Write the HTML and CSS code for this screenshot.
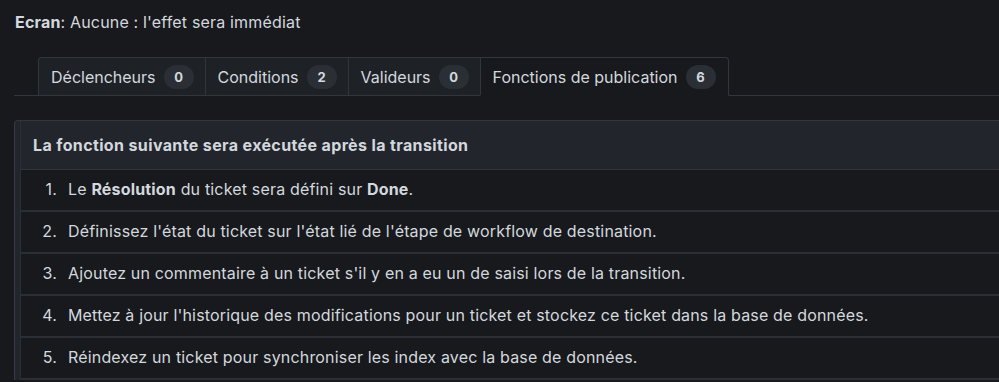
FILE: index.html
```html
<!DOCTYPE html>
<html lang="fr">
  <head>
    <meta charset="UTF-8" />
    <title>Transition</title>
    <link rel="stylesheet" href="styles.css">
  </head>
  <body>
    <p class="screen"><strong>Ecran</strong>: Aucune : l'effet sera immédiat</p>

    <div class="tabs">
      <div class="tab">Déclencheurs <span class="counter">0</span></div>
      <div class="tab">Conditions <span class="counter">2</span></div>
      <div class="tab">Valideurs <span class="counter">0</span></div>
      <div class="tab active">Fonctions de publication <span class="counter">6</span></div>
    </div>

    <div class="panel">
      <div class="panel-inner">
        <div class="panel-header">La fonction suivante sera exécutée après la transition</div>
        <ol class="steps">
          <li>Le <strong>Résolution</strong> du ticket sera défini sur <strong>Done</strong>.</li>
          <li>Définissez l'état du ticket sur l'état lié de l'étape de workflow de destination.</li>
          <li>Ajoutez un commentaire à un ticket s'il y en a eu un de saisi lors de la transition.</li>
          <li>Mettez à jour l'historique des modifications pour un ticket et stockez ce ticket dans la base de données.</li>
          <li>Réindexez un ticket pour synchroniser les index avec la base de données.</li>
        </ol>
      </div>
    </div>
  </body>
</html>
```

FILE: styles.css
```css
* {
  box-sizing: border-box;
}

body {
  background-color: #17191c;
  color: #d3d8de;
  margin: 0;
  padding: 10px 0 0 14px;
  overflow: hidden;
  font-family: Inter, 'Noto Sans', sans-serif;
  font-size: 16px;
  line-height: 24px;
  letter-spacing: 0.17px;
}

strong {
  font-weight: 700;
}

.screen {
  margin: 0 0 23px 1px;
}

.tabs {
  display: flex;
  padding-left: 24px;
  border-bottom: 1px solid #30363d;
  letter-spacing: 0;
}

.tab {
  display: flex;
  align-items: center;
  gap: 8px;
  height: 38px;
  padding: 0 11px 0 12px;
  margin-bottom: -1px;
  margin-right: -1px;
  background-color: #1e2227;
  border: 1px solid #30363d;
  border-bottom: 0;
}

.tab:first-child {
  border-top-left-radius: 4px;
}

.tab.active {
  background-color: #17191c;
  border-bottom: 1px solid #17191c;
  border-top-right-radius: 4px;
  height: 39px;
  padding-right: 12px;
}

.counter {
  display: inline-block;
  min-width: 30px;
  padding: 0 9px;
  line-height: 24px;
  border-radius: 12px;
  background-color: #2a2f36;
  font-size: 13px;
  font-weight: 700;
  text-align: center;
}

.panel {
  margin-top: 24px;
  border-left: 1px solid #353b42;
  border-top: 1px solid #30363d;
  border-top-left-radius: 4px;
  padding-left: 5px;
  background-color: #22262c;
}

.panel-inner {
  background-color: #17191c;
  border-left: 1px solid #2b3036;
}

.panel-header {
  background-color: #22262c;
  height: 49px;
  padding: 12px;
  font-weight: 700;
  letter-spacing: 0.37px;
  border-bottom: 1px solid #30363d;
}

.steps {
  margin: 0;
  padding: 0;
  list-style: none;
  counter-reset: step;
}

.steps li {
  counter-increment: step;
  height: 42px;
  padding-top: 7px;
  border-bottom: 2px solid #2b2f35;
  white-space: nowrap;
}

.steps li::before {
  content: counter(step) '.';
  display: inline-block;
  width: 36px;
  margin-right: 11px;
  text-align: right;
}
```
